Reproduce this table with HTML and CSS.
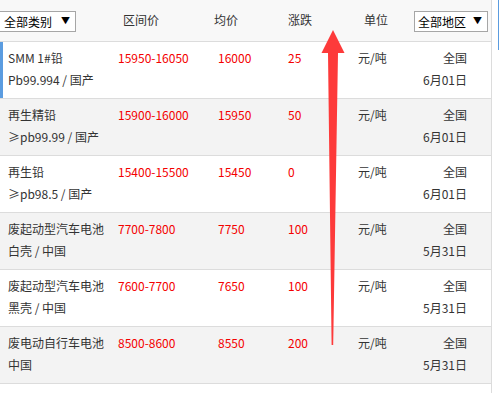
FILE: index.html
```html
<!DOCTYPE html>
<html lang="zh">
<head>
<meta charset="utf-8">
<link rel="stylesheet" href="styles.css">
</head>
<body>
<div class="page">
  <div class="table">
    <div class="head">
      <div class="sel sel-left"><span>全部类别</span><span class="tri">▼</span></div>
      <div class="hcell">区间价</div>
      <div class="hcell">均价</div>
      <div class="hcell">涨跌</div>
      <div class="hcell">单位</div>
      <div class="sel sel-right"><span>全部地区</span><span class="tri">▼</span></div>
    </div>

    <div class="row active">
      <div class="name"><div>SMM 1#铅</div><div>Pb99.994 / 国产</div></div>
      <div class="red">15950-16050</div>
      <div class="red">16000</div>
      <div class="red">25</div>
      <div class="unit">元/吨</div>
      <div class="region"><div>全国</div><div>6月01日</div></div>
    </div>

    <div class="row alt">
      <div class="name"><div>再生精铅</div><div>≥pb99.99 / 国产</div></div>
      <div class="red">15900-16000</div>
      <div class="red">15950</div>
      <div class="red">50</div>
      <div class="unit">元/吨</div>
      <div class="region"><div>全国</div><div>6月01日</div></div>
    </div>

    <div class="row">
      <div class="name"><div>再生铅</div><div>≥pb98.5 / 国产</div></div>
      <div class="red">15400-15500</div>
      <div class="red">15450</div>
      <div class="red">0</div>
      <div class="unit">元/吨</div>
      <div class="region"><div>全国</div><div>6月01日</div></div>
    </div>

    <div class="row alt">
      <div class="name"><div>废起动型汽车电池</div><div>白壳 / 中国</div></div>
      <div class="red">7700-7800</div>
      <div class="red">7750</div>
      <div class="red">100</div>
      <div class="unit">元/吨</div>
      <div class="region"><div>全国</div><div>5月31日</div></div>
    </div>

    <div class="row">
      <div class="name"><div>废起动型汽车电池</div><div>黑壳 / 中国</div></div>
      <div class="red">7600-7700</div>
      <div class="red">7650</div>
      <div class="red">100</div>
      <div class="unit">元/吨</div>
      <div class="region"><div>全国</div><div>5月31日</div></div>
    </div>

    <div class="row alt">
      <div class="name"><div>废电动自行车电池</div><div>中国</div></div>
      <div class="red">8500-8600</div>
      <div class="red">8550</div>
      <div class="red">200</div>
      <div class="unit">元/吨</div>
      <div class="region"><div>全国</div><div>5月31日</div></div>
    </div>

    <div class="row blank"></div>
  </div>
  <div class="scroll-mark"></div>

  <svg class="arrow" width="499" height="393" viewBox="0 0 499 393">
    <polygon points="333,30 344.5,53 338,53 333.2,345 331.6,345 328,53 321.5,53" fill="#fd3a3a"/>
  </svg>
</div>
</body>
</html>
```

FILE: styles.css
```css
html, body {
  margin: 0;
  padding: 0;
  background: #fff;
}

body {
  font-family: "Noto Sans CJK SC", "Noto Sans", sans-serif;
  font-size: 12px;
  color: #333;
  overflow: hidden;
}

.page {
  position: relative;
  width: 499px;
  height: 393px;
  overflow: hidden;
  display: flex;
  align-items: flex-start;
  gap: 6px;
}

.table {
  width: 491px;
  height: 393px;
  border-right: 1px solid #dcdcdc;
  flex: none;
  overflow: hidden;
}

.head {
  height: 41px;
  border-bottom: 1px solid #dcdcdc;
  background: #f8f8f8;
  display: grid;
  grid-template-columns: 123px 91px 74px 76px 1fr auto;
  align-items: center;
}

.hcell {
  line-height: 20px;
  margin-top: -2px;
}

.sel {
  height: 19px;
  border: 1px solid #a6a6a6;
  background: #fff;
  color: #000;
  display: flex;
  align-items: center;
  justify-content: space-between;
  box-sizing: content-box;
  margin-top: 1px;
}

.sel-left {
  width: 66px;
  margin-left: -1px;
  justify-self: start;
  padding: 0 5px 0 4px;
}

.sel-right {
  width: 64px;
  margin-right: 3px;
  padding: 0 5px 0 3px;
}

.tri {
  font-size: 9px;
  line-height: 10px;
}

.row {
  height: 57px;
  box-sizing: border-box;
  padding: 5px 24px 0 8px;
  border-bottom: 1px solid #dcdcdc;
  display: grid;
  grid-template-columns: 110px 100px 70px 70px 1fr auto;
  align-items: start;
  line-height: 22px;
}

.row.alt {
  background: #f3f3f3;
}

.row.active {
  box-shadow: inset 3px 0 0 #5b9ce0;
}

.row.blank {
  border-bottom: none;
}

.name div {
  white-space: nowrap;
}

.red {
  color: #f40000;
}

.region {
  text-align: right;
}

.scroll-mark {
  width: 1px;
  height: 50px;
  background: #5b9ce0;
  flex: none;
}

.arrow {
  position: absolute;
  left: 0;
  top: 0;
  pointer-events: none;
}
```
